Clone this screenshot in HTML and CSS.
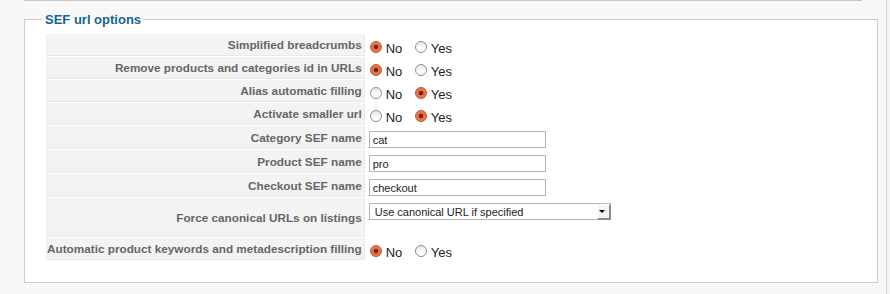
FILE: index.html
```html
<!DOCTYPE html>
<html lang="en">

<head>
    <meta charset="UTF-8">
    <title>SEF url options</title>
    <link rel="stylesheet" href="styles.css">
</head>

<body>
    <div class="page">
        <div class="prev-box"></div>

        <fieldset class="adminform">
            <legend>SEF url options</legend>
            <table class="admintable">
                <tr>
                    <td class="key">Simplified breadcrumbs</td>
                    <td class="value">
                        <label class="radio"><input type="radio" name="simplified_breadcrumbs" checked> No</label>
                        <label class="radio"><input type="radio" name="simplified_breadcrumbs"> Yes</label>
                    </td>
                </tr>
                <tr>
                    <td class="key">Remove products and categories id in URLs</td>
                    <td class="value">
                        <label class="radio"><input type="radio" name="sef_remove_id" checked> No</label>
                        <label class="radio"><input type="radio" name="sef_remove_id"> Yes</label>
                    </td>
                </tr>
                <tr>
                    <td class="key">Alias automatic filling</td>
                    <td class="value">
                        <label class="radio"><input type="radio" name="alias_auto_fill"> No</label>
                        <label class="radio"><input type="radio" name="alias_auto_fill" checked> Yes</label>
                    </td>
                </tr>
                <tr>
                    <td class="key">Activate smaller url</td>
                    <td class="value">
                        <label class="radio"><input type="radio" name="simplified_url"> No</label>
                        <label class="radio"><input type="radio" name="simplified_url" checked> Yes</label>
                    </td>
                </tr>
                <tr>
                    <td class="key">Category SEF name</td>
                    <td class="value"><input class="inputbox" type="text" value="cat"></td>
                </tr>
                <tr>
                    <td class="key">Product SEF name</td>
                    <td class="value"><input class="inputbox" type="text" value="pro"></td>
                </tr>
                <tr>
                    <td class="key">Checkout SEF name</td>
                    <td class="value"><input class="inputbox" type="text" value="checkout"></td>
                </tr>
                <tr>
                    <td class="key">Force canonical URLs on listings</td>
                    <td class="value tall">
                        <span class="select-wrap">
                            <select class="selectbox">
                                <option>Use canonical URL if specified</option>
                                <option>Use canonical URL if specified or generate one</option>
                                <option>No</option>
                            </select>
                        </span>
                    </td>
                </tr>
                <tr>
                    <td class="key">Automatic product keywords and metadescription filling</td>
                    <td class="value">
                        <label class="radio"><input type="radio" name="auto_keywords" checked> No</label>
                        <label class="radio"><input type="radio" name="auto_keywords"> Yes</label>
                    </td>
                </tr>
            </table>
        </fieldset>
    </div>
</body>

</html>
```

FILE: styles.css
```css
body {
    margin: 0;
    font-family: "Liberation Sans", Arial, sans-serif;
    background-color: #f4f4f4;
}

.page {
    width: 886px;
    height: 294px;
    background-color: #f8f8f8;
    border-right: 1px solid #d6d6d6;
    overflow: hidden;
}

.prev-box {
    width: 838px;
    margin-left: 24px;
    border-top: 1px solid #c8c8c8;
}

fieldset.adminform {
    width: 810px;
    margin: 11px 0 0 24px;
    padding: 1px 21px 21px;
    background-color: #fff;
    border: 1px solid #cccccc;
}

fieldset.adminform legend {
    margin-left: -3px;
    padding: 0 2px;
    color: #146295;
    font-size: 13px;
    font-weight: bold;
    line-height: 15px;
}

table.admintable {
    border-collapse: separate;
    border-spacing: 0 1px;
    margin-top: 5px;
}

table.admintable td {
    padding: 0;
}

table.admintable td.key {
    background-color: #f3f3f3;
    color: #666;
    font-size: 11.75px;
    font-weight: bold;
    text-align: right;
    vertical-align: middle;
    white-space: nowrap;
    padding: 0 2px 0 1px;
    border-bottom: 1px solid #e9e9e9;
    border-right: 1px solid #e9e9e9;
}

table.admintable td.value {
    padding: 3px 4px 1px;
    height: 17px;
    vertical-align: top;
    line-height: 17px;
}

table.admintable td.tall {
    padding-bottom: 17px;
}

.radio {
    display: inline-flex;
    align-items: center;
    gap: 4px;
    margin-left: 1px;
    margin-right: 7px;
    color: #222;
    font-size: 13px;
    line-height: 17px;
    position: relative;
    top: 2px;
}

.radio input {
    appearance: none;
    -webkit-appearance: none;
    width: 12px;
    height: 12px;
    margin: -3px 0 0;
    border: 1px solid #8e8e8e;
    border-radius: 50%;
    background: linear-gradient(#e6e6e6, #ffffff 70%);
    box-sizing: border-box;
}

.radio input:checked {
    border-color: #b8532e;
    background: radial-gradient(circle, #5e2613 0, #6b2a14 1.8px, #ea6a3f 2.6px, #f08a62 100%);
}

.inputbox {
    width: 177px;
    height: 17px;
    margin: 2px 0 0;
    padding: 0 3px;
    border: 1px solid #b4b4b4;
    box-sizing: border-box;
    font-family: "Liberation Sans", Arial, sans-serif;
    font-size: 11px;
    color: #222;
    background: #fff;
}

.select-wrap {
    position: relative;
    display: inline-block;
    margin-top: 2px;
}

.selectbox {
    appearance: none;
    -webkit-appearance: none;
    display: block;
    width: 242px;
    height: 17px;
    margin: 0;
    padding: 0 20px 0 5px;
    border: 1px solid #b4b4b4;
    border-radius: 0;
    box-sizing: border-box;
    background: #fff;
    font-family: "Liberation Sans", Arial, sans-serif;
    font-size: 11px;
    color: #222;
}

.select-wrap::after {
    content: "";
    position: absolute;
    top: 1px;
    right: 0;
    width: 11px;
    height: 13px;
    background: #f4f4f4;
    border-left: 1px solid #fff;
    border-top: 1px solid #fff;
    border-right: 2px solid #8a8a8a;
    border-bottom: 2px solid #8a8a8a;
    pointer-events: none;
}

.select-wrap::before {
    content: "";
    position: absolute;
    top: 7px;
    right: 6px;
    z-index: 1;
    border-left: 3px solid transparent;
    border-right: 3px solid transparent;
    border-top: 3px solid #000;
    pointer-events: none;
}
```
